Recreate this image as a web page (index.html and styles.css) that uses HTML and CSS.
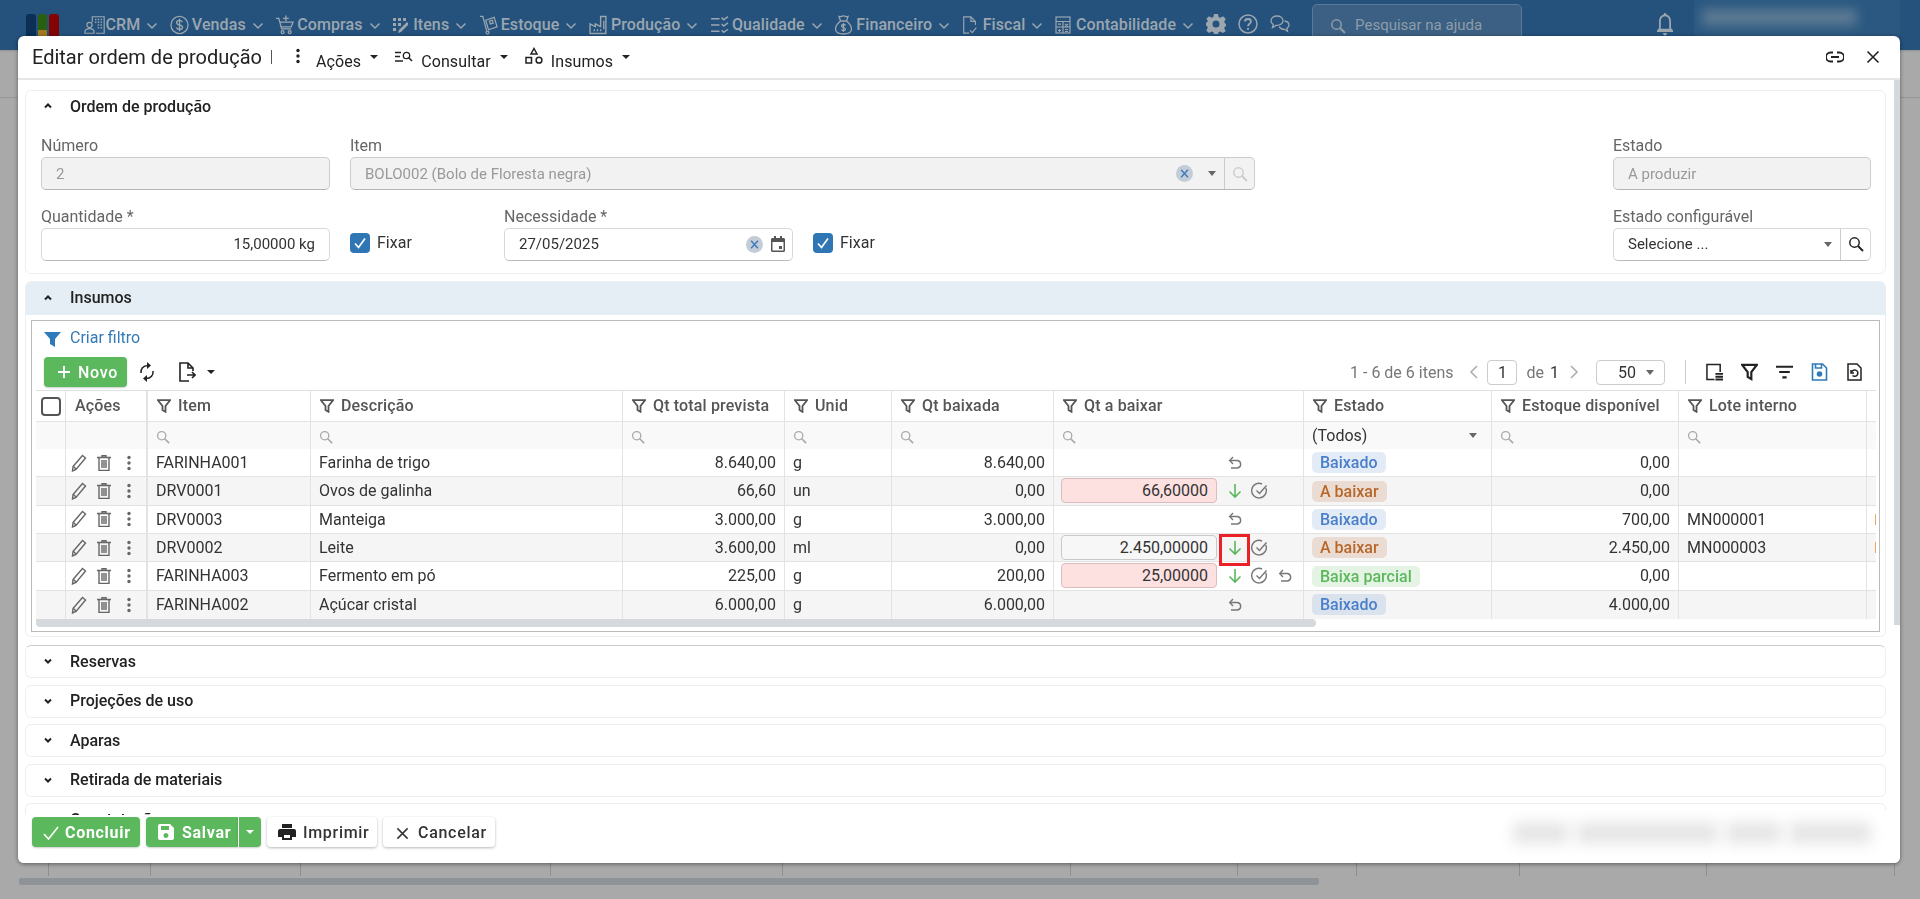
FILE: index.html
```html
<!DOCTYPE html>
<html lang="pt-BR">
<head>
<meta charset="utf-8">
<title>Editar ordem de produção</title>
<link rel="stylesheet" href="styles.css">
</head>
<body>
<svg class="sprite" xmlns="http://www.w3.org/2000/svg">
  <symbol id="i-chev" viewBox="0 0 12 8"><path d="M1.5 1.5 6 6l4.500-4.500" fill="none" stroke="currentColor" stroke-width="1.5"/></symbol>
  <symbol id="i-chev-bold" viewBox="0 0 10 8"><path d="M2 2.500 5 5.500l3-3" fill="none" stroke="currentColor" stroke-width="2"/></symbol>
  <symbol id="i-chev-up" viewBox="0 0 10 8"><path d="M2 5.500 5 2.500l3 3" fill="none" stroke="currentColor" stroke-width="2"/></symbol>
  <symbol id="i-crm" viewBox="0 0 24 20" fill="none" stroke="currentColor" stroke-width="1.300"><circle cx="6" cy="10" r="2.800"/><path d="M1 19v-1.500c0-2.200 2-3.500 5-3.500s5 1.300 5 3.500V19z"/><path d="M9 7V1h13v18H13"/><path d="M12 4h1.500M15 4h1.500M18 4h1.500M12 7h1.500M15 7h1.500M18 7h1.500M15 10h1.500M18 10h1.500M15 13h1.500M18 13h1.500" stroke-width="1.600"/></symbol>
  <symbol id="i-money" viewBox="0 0 20 20" fill="none" stroke="currentColor" stroke-width="1.400"><circle cx="10" cy="10" r="9"/><path d="M13 7c-.5-1.300-1.700-1.800-3-1.800-1.700 0-3 .8-3 2.300 0 3.200 6.200 1.600 6.200 4.800 0 1.500-1.400 2.400-3.200 2.400-1.500 0-2.800-.7-3.200-2M10 3.500v13"/></symbol>
  <symbol id="i-cart" viewBox="0 0 20 20" fill="none" stroke="currentColor" stroke-width="1.400"><path d="M1 3h3l3 11h10M5 7h14l-2 5H6.500"/><path d="M11.500 0v6M8.500 3h6"/><circle cx="8" cy="17.500" r="1.500"/><circle cx="15.500" cy="17.500" r="1.500"/></symbol>
  <symbol id="i-items" viewBox="0 0 16 16" fill="currentColor"><path d="M1 1h3v3H1zM6 1h3v3H6zM11 1h3v3h-3zM1 6h3v3H1zM6 6h3v3H6zM1 11h3v3H1z"/><path d="M15 5 7 13l-1 3 3-1 8-8z"/></symbol>
  <symbol id="i-stock" viewBox="0 0 20 20" fill="none" stroke="currentColor" stroke-width="1.300"><path d="M1 1h3l4 15"/><circle cx="9" cy="18" r="1.600"/><path d="m7 5 9-3 3 10-9 3z"/><path d="m11 6 3-1 1 3-3 1z"/></symbol>
  <symbol id="i-factory" viewBox="0 0 18 18" fill="none" stroke="currentColor" stroke-width="1.300"><path d="M1 17V8l5 2.500V8l5 2.500V1h5v16z"/><path d="M5 13v2M8 13v2M11 13v2M14 5v8"/></symbol>
  <symbol id="i-quality" viewBox="0 0 18 18" fill="none" stroke="currentColor" stroke-width="1.400"><path d="M1 3h8M1 9h8M1 15h8M11 2l2 2 4-3M11 8l2 2 4-3M11 14l2 2 4-3"/></symbol>
  <symbol id="i-bag" viewBox="0 0 18 20" fill="none" stroke="currentColor" stroke-width="1.300"><path d="M6 6 4.500 1.500C6 2.300 7 .8 9 .8s3 1.500 4.500.7L12 6zM6 6h6M6 6c-3 2.500-5 5.500-5 8 0 3 2 5 8 5s8-2 8-5c0-2.500-2-5.500-5-8"/><path d="M11 10.500C10.600 9.700 9.800 9.500 9 9.500c-1 0-2 .5-2 1.500 0 2 4 1.200 4 3.200 0 1-1 1.500-2 1.500-.9 0-1.700-.4-2-1.200M9 8v9"/></symbol>
  <symbol id="i-doc" viewBox="0 0 16 20" fill="none" stroke="currentColor" stroke-width="1.300"><path d="M7 19H1V1h8l5 5v4M9 1v5h5"/><path d="m8 16 2.500 2.500L15 13"/></symbol>
  <symbol id="i-calc" viewBox="0 0 16 18" fill="none" stroke="currentColor" stroke-width="1.200"><rect x="1" y="1" width="14" height="16"/><path d="M1 5.500h14M8 5.500V17M1 11h14M3 8.200h3M4.500 13v3M3 14.500h3M10 8l3 2.500M13 8l-3 2.500M10 13.500h3M10 15.500h3"/></symbol>
  <symbol id="i-gear" viewBox="0 0 20 20"><path fill="currentColor" fill-rule="evenodd" d="M8 0h4l.6 3 1.800.8L17 2.200 19.800 5l-1.600 2.600.8 1.800 1 .4v2.400l-1 .4-.8 1.800 1.600 2.600L17 19l-2.600-1.600-1.800.8L12 20H8l-.6-1.800-1.800-.8L3 19 .2 16.400l1.600-2.600-.8-1.800L0 11.400V8.600l1-.2.800-1.800L.2 5 3 2.200l2.600 1.600 1.800-.8zM10 6.500a3.500 3.500 0 1 0 0 7 3.500 3.500 0 0 0 0-7z"/></symbol>
  <symbol id="i-help" viewBox="0 0 20 20" fill="none" stroke="currentColor" stroke-width="1.500"><circle cx="10" cy="10" r="9"/><path d="M7 7.500C7 5.700 8.300 5 10 5s3 .9 3 2.500c0 2.300-3 2.300-3 4.700" stroke-width="1.800"/><path d="M10 14v1.800" stroke-width="2"/></symbol>
  <symbol id="i-chat" viewBox="0 0 20 18" fill="none" stroke="currentColor" stroke-width="1.300"><path d="M7 1c3.300 0 6 2 6 4.700S10.300 10.400 7 10.400H6L2.500 12.500l.8-3C1.800 8.600 1 7.300 1 5.700 1 3 3.700 1 7 1z"/><path d="M14.500 6c2.600.4 4.500 2 4.500 4 0 1.400-.8 2.600-2.200 3.300l.7 3-3-2c-2.500 0-4.500-1-5.300-2.700"/></symbol>
  <symbol id="i-search" viewBox="0 0 16 16" fill="none" stroke="currentColor" stroke-width="1.500"><circle cx="6.500" cy="6.500" r="4.700"/><path d="m10 10 5 5" stroke-width="2"/></symbol>
  <symbol id="i-bell" viewBox="0 0 20 24"><path fill="currentColor" fill-rule="evenodd" d="M10 0c.8 0 1.300.6 1.400 1.500C14.500 2.400 16 5 16 8.500V15l2 2.500V19H2v-1.500L4 15V8.500C4 5 5.500 2.400 8.600 1.500 8.700.6 9.200 0 10 0zm0 3.300C7.200 3.300 5.800 5.500 5.800 8.500v7.300h8.400V8.500c0-3-1.400-5.200-4.200-5.200zM8 20h4c0 1.500-.8 2.500-2 2.500S8 21.500 8 20z"/></symbol>
  <symbol id="i-dots" viewBox="0 0 6 16" fill="currentColor"><circle cx="3" cy="2.500" r="1.700"/><circle cx="3" cy="8" r="1.700"/><circle cx="3" cy="13.500" r="1.700"/></symbol>
  <symbol id="i-lookup" viewBox="0 0 18 12" fill="none" stroke="currentColor" stroke-width="1.300"><path d="M0 1.500h6M0 5.500h5M0 10h8"/><circle cx="11.500" cy="4.500" r="3.200"/><path d="m14 7 3 3" stroke-width="1.600"/></symbol>
  <symbol id="i-shapes" viewBox="0 0 18 17" fill="none" stroke="currentColor" stroke-width="1.500"><path d="M9 1.500 12 7H6z"/><rect x="1" y="10.500" width="5.500" height="5.500"/><circle cx="14" cy="13.200" r="2.900"/></symbol>
  <symbol id="i-link" viewBox="0 0 18 12" fill="none" stroke="currentColor" stroke-width="1.800"><path d="M7 1.500H4.500a4.500 4.500 0 0 0 0 9H7M11 1.500h2.500a4.500 4.500 0 0 1 0 9H11M5 6h8"/></symbol>
  <symbol id="i-close" viewBox="0 0 14 14" fill="none" stroke="currentColor" stroke-width="1.600"><path d="m1.500 1.500 11 11M12.500 1.500l-11 11"/></symbol>
  <symbol id="i-x" viewBox="0 0 16 16"><circle cx="8" cy="8" r="8" fill="#c4ccd6"/><path d="m4.800 4.500 6.400 7M11.200 4.500l-6.400 7" stroke="#3f7cbb" stroke-width="1.400"/></symbol>
  <symbol id="i-cal" viewBox="0 0 14 16"><path fill="#555" fill-rule="evenodd" d="M3 0h2v2h4V0h2v2h1.500c.8 0 1.500.7 1.500 1.500v11c0 .8-.7 1.500-1.500 1.500h-11C.7 16 0 15.300 0 14.500v-11C0 2.700.7 2 1.500 2H3zM1.500 6v8.500h11V6zM8 10h3v3H8z"/></symbol>
  <symbol id="i-check" viewBox="0 0 20 20"><path d="m5 10.500 3.500 4L15 5.500" fill="none" stroke="#fff" stroke-width="1.700"/></symbol>
  <symbol id="i-funnel-solid" viewBox="0 0 18 18"><path fill="#2f7ab9" d="M0 2h17l-6 7v8l-5-3V9z"/></symbol>
  <symbol id="i-funnel" viewBox="0 0 14 14"><path d="M1 1.200h12L8.500 7v5.800l-3-1.800V7z" fill="none" stroke="currentColor" stroke-width="1.800"/></symbol>
  <symbol id="i-sync" viewBox="0 0 16 20" fill="none" stroke="#222" stroke-width="1.500"><path d="M2 11C1.500 7 4 3.500 9 3.500"/><path d="M14 9c.5 4-2 7.500-7 7.500"/><path fill="#222" stroke="none" d="M8 0l4 3.500L8 7zM8 13l-4 3.500L8 20z"/></symbol>
  <symbol id="i-export" viewBox="0 0 17 20" fill="none" stroke="#222" stroke-width="1.600"><path d="M10 19H1V1h8l5 5v3M9 1v5h5M8 13h8M13 10l3 3-3 3"/></symbol>
  <symbol id="i-plus" viewBox="0 0 14 14"><path d="M7 1v12M1 7h12" stroke="#fff" stroke-width="2"/></symbol>
  <symbol id="i-left" viewBox="0 0 10 16"><path d="M8 2 2 8l6 6" fill="none" stroke="currentColor" stroke-width="1.500"/></symbol>
  <symbol id="i-right" viewBox="0 0 10 16"><path d="m2 2 6 6-6 6" fill="none" stroke="currentColor" stroke-width="1.500"/></symbol>
  <symbol id="i-columns" viewBox="0 0 18 18" fill="none" stroke="#222" stroke-width="1.600"><path d="M9 17H1V1h14v8"/><path fill="#222" stroke="none" d="M10 10h8v2h-8zM10 13h8v2h-8zM10 16h8v2h-8z"/></symbol>
  <symbol id="i-sort" viewBox="0 0 16 14"><path d="M0 2h16M3 7h10M6 12h4" stroke="#222" stroke-width="2"/></symbol>
  <symbol id="i-save" viewBox="0 0 16 18" fill="none" stroke="#2f7ab9" stroke-width="1.600"><path d="M1 1h10l4 4v12H1z"/><path d="M4 1v4h6V1"/><circle cx="8" cy="11" r="2" fill="#2f7ab9"/></symbol>
  <symbol id="i-restore" viewBox="0 0 15 18" fill="none" stroke="#222" stroke-width="1.500"><path d="M1 1h9l4 4v12H1z"/><path d="M4.500 9.500a3.200 3.200 0 1 1 1 3"/><path d="M4 7v3h3"/></symbol>
  <symbol id="i-pencil" viewBox="0 0 16 18" fill="none" stroke="#666" stroke-width="1.400"><path d="M2 12.500 11.500 1.500l3 2.500L5 15.500 1.500 17z"/><path d="m2.500 12.500 2.500 2.500"/></symbol>
  <symbol id="i-trash" viewBox="0 0 14 16" fill="none" stroke="#666" stroke-width="1.400"><path d="M0 2.500h14M5 2.500V.8h4v1.700M2 2.500v13h10v-13M5 5v8M7 5v8M9 5v8"/></symbol>
  <symbol id="i-down" viewBox="0 0 14 16" fill="none" stroke="#5cb85c" stroke-width="1.600"><path d="M7 1v13M1.500 8.500 7 14l5.500-5.500"/></symbol>
  <symbol id="i-done" viewBox="0 0 18 18" fill="none" stroke="#777" stroke-width="1.400"><path d="M14.800 6A7.300 7.300 0 1 1 11 2"/><path d="m5.500 8.500 3 3 7-8"/></symbol>
  <symbol id="i-undo" viewBox="0 0 14 14" fill="none" stroke="#777" stroke-width="1.400"><path d="M2 4.500h7.500a3.800 3.800 0 0 1 0 7.500H3"/><path d="M5 1 1.700 4.500 5 8"/></symbol>
  <symbol id="i-tick" viewBox="0 0 16 14"><path d="m1 8 4.500 5L15 1" fill="none" stroke="#fff" stroke-width="1.600"/></symbol>
  <symbol id="i-floppy" viewBox="0 0 16 16"><path fill="#fff" fill-rule="evenodd" d="M2 0h10l4 4v10a2 2 0 0 1-2 2H2a2 2 0 0 1-2-2V2a2 2 0 0 1 2-2zm1 2v4h8V2zm5 7a2.500 2.500 0 1 0 0 5 2.500 2.500 0 0 0 0-5z"/></symbol>
  <symbol id="i-print" viewBox="0 0 18 16"><path fill="#222" fill-rule="evenodd" d="M4 0h10v4H4zM2 5h14a2 2 0 0 1 2 2v6h-4v3H4v-3H0V7a2 2 0 0 1 2-2zm4 6v3h6v-3z"/></symbol>
</svg>

<div class="backdrop">
  <header class="topbar">
    <div class="logo"><span class="logo-bar logo-navy"></span><span class="logo-bar logo-mid"><span class="logo-ochre"></span></span><span class="logo-bar logo-red"></span></div>
    <nav class="nav">
      <a class="nav-item"><svg class="nav-ic nav-ic-crm"><use href="#i-crm"/></svg>CRM<svg class="nav-chev"><use href="#i-chev"/></svg></a>
      <a class="nav-item"><svg class="nav-ic"><use href="#i-money"/></svg>Vendas<svg class="nav-chev"><use href="#i-chev"/></svg></a>
      <a class="nav-item"><svg class="nav-ic"><use href="#i-cart"/></svg>Compras<svg class="nav-chev"><use href="#i-chev"/></svg></a>
      <a class="nav-item"><svg class="nav-ic nav-ic-sm"><use href="#i-items"/></svg>Itens<svg class="nav-chev"><use href="#i-chev"/></svg></a>
      <a class="nav-item"><svg class="nav-ic"><use href="#i-stock"/></svg>Estoque<svg class="nav-chev"><use href="#i-chev"/></svg></a>
      <a class="nav-item"><svg class="nav-ic"><use href="#i-factory"/></svg>Produção<svg class="nav-chev"><use href="#i-chev"/></svg></a>
      <a class="nav-item"><svg class="nav-ic"><use href="#i-quality"/></svg>Qualidade<svg class="nav-chev"><use href="#i-chev"/></svg></a>
      <a class="nav-item"><svg class="nav-ic"><use href="#i-bag"/></svg>Financeiro<svg class="nav-chev"><use href="#i-chev"/></svg></a>
      <a class="nav-item"><svg class="nav-ic nav-ic-sm"><use href="#i-doc"/></svg>Fiscal<svg class="nav-chev"><use href="#i-chev"/></svg></a>
      <a class="nav-item"><svg class="nav-ic nav-ic-sm"><use href="#i-calc"/></svg>Contabilidade<svg class="nav-chev"><use href="#i-chev"/></svg></a>
    </nav>
    <div class="top-tools">
      <svg class="tool-ic"><use href="#i-gear"/></svg>
      <svg class="tool-ic"><use href="#i-help"/></svg>
      <svg class="tool-ic"><use href="#i-chat"/></svg>
    </div>
    <div class="help-search"><svg class="help-search-ic"><use href="#i-search"/></svg>Pesquisar na ajuda</div>
    <svg class="bell"><use href="#i-bell"/></svg>
    <div class="user-blur"><span class="user-blob"></span></div>
  </header>
  <div class="subbar"></div>
  <div class="bg-cells"><i></i><i></i><i></i><i></i><i></i><i></i><i></i><i></i><i></i><i></i><i></i></div>
  <div class="bg-scroll"></div>
</div>

<section class="modal">
  <div class="modal-head">
    <h1 class="modal-title">Editar ordem de produção</h1>
    <span class="title-sep"></span>
    <svg class="head-dots"><use href="#i-dots"/></svg>
    <a class="head-menu">Ações<span class="caret-dark"></span></a>
    <svg class="head-ic"><use href="#i-lookup"/></svg>
    <a class="head-menu">Consultar<span class="caret-dark"></span></a>
    <svg class="head-ic head-ic-shapes"><use href="#i-shapes"/></svg>
    <a class="head-menu">Insumos<span class="caret-dark"></span></a>
    <svg class="head-link"><use href="#i-link"/></svg>
    <svg class="head-close"><use href="#i-close"/></svg>
  </div>

  <div class="modal-main">
    <div class="modal-scroll">
      <div class="card card-form">
        <div class="sec-head"><svg class="sec-chev"><use href="#i-chev-up"/></svg>Ordem de produção</div>
        <div class="form-row">
          <div class="field f-num"><label class="lbl">Número</label><div class="ctl ctl-off">2</div></div>
          <div class="field f-item"><label class="lbl">Item</label>
            <div class="ctl ctl-off ctl-combo"><span class="ctl-text">BOLO002 (Bolo de Floresta negra)</span><svg class="clear"><use href="#i-x"/></svg><span class="caret-sm"></span><span class="ctl-btn"><svg class="btn-search is-off"><use href="#i-search"/></svg></span></div></div>
          <div class="field f-end"><label class="lbl">Estado</label><div class="ctl ctl-off">A produzir</div></div>
        </div>
        <div class="form-row form-row-2">
          <div class="field f-num"><label class="lbl">Quantidade *</label><div class="ctl ctl-right">15,00000 kg</div></div>
          <div class="fix f-fix1"><span class="cb"><svg><use href="#i-check"/></svg></span>Fixar</div>
          <div class="field f-num f-date"><label class="lbl">Necessidade *</label>
            <div class="ctl ctl-combo ctl-date"><span class="ctl-text">27/05/2025</span><svg class="clear"><use href="#i-x"/></svg><svg class="cal"><use href="#i-cal"/></svg></div></div>
          <div class="fix"><span class="cb"><svg><use href="#i-check"/></svg></span>Fixar</div>
          <div class="field f-end"><label class="lbl">Estado configurável</label>
            <div class="ctl ctl-combo"><span class="ctl-text">Selecione ...</span><span class="caret-sm"></span><span class="ctl-btn"><svg class="btn-search"><use href="#i-search"/></svg></span></div></div>
        </div>
      </div>

      <div class="card card-grid">
        <div class="sec-head sec-head-on"><svg class="sec-chev"><use href="#i-chev-up"/></svg>Insumos</div>
        <div class="grid-box">
          <div class="filter-link"><svg class="filter-link-ic"><use href="#i-funnel-solid"/></svg>Criar filtro</div>
          <div class="toolbar">
            <button class="btn btn-green btn-new"><svg class="btn-plus"><use href="#i-plus"/></svg>Novo</button>
            <svg class="tb-sync"><use href="#i-sync"/></svg>
            <svg class="tb-export"><use href="#i-export"/></svg>
            <span class="caret-dark caret-export"></span>
            <div class="pager">
              <span class="pager-count">1 - 6 de 6 itens</span>
              <svg class="pager-arrow"><use href="#i-left"/></svg>
              <span class="pager-input">1</span>
              <span class="pager-de">de</span>
              <span class="pager-total">1</span>
              <svg class="pager-arrow"><use href="#i-right"/></svg>
              <span class="pager-size">50<span class="caret-sm"></span></span>
              <span class="pager-sep"></span>
              <svg class="tb-ic"><use href="#i-columns"/></svg>
              <svg class="tb-ic tb-dark"><use href="#i-funnel"/></svg>
              <svg class="tb-ic"><use href="#i-sort"/></svg>
              <svg class="tb-ic"><use href="#i-save"/></svg>
              <svg class="tb-ic"><use href="#i-restore"/></svg>
            </div>
          </div>
          <div class="table-wrap">
            <table class="dt">
              <colgroup>
                <col class="c-check"><col class="c-act"><col class="c-item"><col class="c-desc"><col class="c-num"><col class="c-unit"><col class="c-num"><col class="c-qt"><col class="c-state"><col class="c-stock"><col class="c-lot"><col class="c-extra">
              </colgroup>
              <thead>
                <tr class="th-row">
                  <th><span class="cb-empty"></span></th>
                  <th class="b2">Ações</th>
                  <th><svg class="th-f"><use href="#i-funnel"/></svg>Item</th>
                  <th><svg class="th-f"><use href="#i-funnel"/></svg>Descrição</th>
                  <th><svg class="th-f"><use href="#i-funnel"/></svg>Qt total prevista</th>
                  <th><svg class="th-f"><use href="#i-funnel"/></svg>Unid</th>
                  <th><svg class="th-f"><use href="#i-funnel"/></svg>Qt baixada</th>
                  <th><svg class="th-f"><use href="#i-funnel"/></svg>Qt a baixar</th>
                  <th><svg class="th-f"><use href="#i-funnel"/></svg>Estado</th>
                  <th><svg class="th-f"><use href="#i-funnel"/></svg>Estoque disponível</th>
                  <th><svg class="th-f"><use href="#i-funnel"/></svg>Lote interno</th>
                  <th><svg class="th-f"><use href="#i-funnel"/></svg></th>
                </tr>
                <tr class="tf-row">
                  <td></td><td class="b2"></td>
                  <td><svg class="tf-s"><use href="#i-search"/></svg></td>
                  <td><svg class="tf-s"><use href="#i-search"/></svg></td>
                  <td><svg class="tf-s"><use href="#i-search"/></svg></td>
                  <td><svg class="tf-s"><use href="#i-search"/></svg></td>
                  <td><svg class="tf-s"><use href="#i-search"/></svg></td>
                  <td><svg class="tf-s"><use href="#i-search"/></svg></td>
                  <td class="tf-todos">(Todos)<span class="caret-sm"></span></td>
                  <td><svg class="tf-s"><use href="#i-search"/></svg></td>
                  <td><svg class="tf-s"><use href="#i-search"/></svg></td>
                  <td><svg class="tf-s"><use href="#i-search"/></svg></td>
                </tr>
              </thead>
              <tbody>
                <tr>
                  <td></td><td class="b2 acts"><svg class="a-pen"><use href="#i-pencil"/></svg><svg class="a-trash"><use href="#i-trash"/></svg><svg class="a-dots"><use href="#i-dots"/></svg></td>
                  <td>FARINHA001</td><td>Farinha de trigo</td><td class="r">8.640,00</td><td>g</td><td class="r">8.640,00</td>
                  <td class="qt"><div class="qt-in"><span class="qt-box is-empty"></span><span class="act"><svg class="ic-undo"><use href="#i-undo"/></svg></span></div></td>
                  <td><span class="tag tag-blue">Baixado</span></td><td class="r">0,00</td><td></td><td></td>
                </tr>
                <tr>
                  <td></td><td class="b2 acts"><svg class="a-pen"><use href="#i-pencil"/></svg><svg class="a-trash"><use href="#i-trash"/></svg><svg class="a-dots"><use href="#i-dots"/></svg></td>
                  <td>DRV0001</td><td>Ovos de galinha</td><td class="r">66,60</td><td>un</td><td class="r">0,00</td>
                  <td class="qt"><div class="qt-in"><span class="qt-box is-bad">66,60000</span><span class="act"><svg class="ic-down"><use href="#i-down"/></svg></span><span class="act"><svg class="ic-done"><use href="#i-done"/></svg></span></div></td>
                  <td><span class="tag tag-brown">A baixar</span></td><td class="r">0,00</td><td></td><td></td>
                </tr>
                <tr>
                  <td></td><td class="b2 acts"><svg class="a-pen"><use href="#i-pencil"/></svg><svg class="a-trash"><use href="#i-trash"/></svg><svg class="a-dots"><use href="#i-dots"/></svg></td>
                  <td>DRV0003</td><td>Manteiga</td><td class="r">3.000,00</td><td>g</td><td class="r">3.000,00</td>
                  <td class="qt"><div class="qt-in"><span class="qt-box is-empty"></span><span class="act"><svg class="ic-undo"><use href="#i-undo"/></svg></span></div></td>
                  <td><span class="tag tag-blue">Baixado</span></td><td class="r">700,00</td><td>MN000001</td><td><span class="mark"></span></td>
                </tr>
                <tr>
                  <td></td><td class="b2 acts"><svg class="a-pen"><use href="#i-pencil"/></svg><svg class="a-trash"><use href="#i-trash"/></svg><svg class="a-dots"><use href="#i-dots"/></svg></td>
                  <td>DRV0002</td><td>Leite</td><td class="r">3.600,00</td><td>ml</td><td class="r">0,00</td>
                  <td class="qt"><div class="qt-in"><span class="qt-box">2.450,00000</span><span class="act is-marked"><svg class="ic-down"><use href="#i-down"/></svg></span><span class="act"><svg class="ic-done"><use href="#i-done"/></svg></span></div></td>
                  <td><span class="tag tag-brown">A baixar</span></td><td class="r">2.450,00</td><td>MN000003</td><td><span class="mark"></span></td>
                </tr>
                <tr>
                  <td></td><td class="b2 acts"><svg class="a-pen"><use href="#i-pencil"/></svg><svg class="a-trash"><use href="#i-trash"/></svg><svg class="a-dots"><use href="#i-dots"/></svg></td>
                  <td>FARINHA003</td><td>Fermento em pó</td><td class="r">225,00</td><td>g</td><td class="r">200,00</td>
                  <td class="qt"><div class="qt-in"><span class="qt-box is-bad">25,00000</span><span class="act"><svg class="ic-down"><use href="#i-down"/></svg></span><span class="act"><svg class="ic-done"><use href="#i-done"/></svg></span><span class="act"><svg class="ic-undo"><use href="#i-undo"/></svg></span></div></td>
                  <td><span class="tag tag-green">Baixa parcial</span></td><td class="r">0,00</td><td></td><td></td>
                </tr>
                <tr>
                  <td></td><td class="b2 acts"><svg class="a-pen"><use href="#i-pencil"/></svg><svg class="a-trash"><use href="#i-trash"/></svg><svg class="a-dots"><use href="#i-dots"/></svg></td>
                  <td>FARINHA002</td><td>Açúcar cristal</td><td class="r">6.000,00</td><td>g</td><td class="r">6.000,00</td>
                  <td class="qt"><div class="qt-in"><span class="qt-box is-empty"></span><span class="act"><svg class="ic-undo"><use href="#i-undo"/></svg></span></div></td>
                  <td><span class="tag tag-blue">Baixado</span></td><td class="r">4.000,00</td><td></td><td></td>
                </tr>
              </tbody>
            </table>
          </div>
          <div class="hbar"><span class="hbar-thumb"></span></div>
        </div>
      </div>

      <div class="card card-fold card-fold-first"><div class="sec-head"><svg class="sec-chev"><use href="#i-chev-bold"/></svg>Reservas</div></div>
      <div class="card card-fold"><div class="sec-head"><svg class="sec-chev"><use href="#i-chev-bold"/></svg>Projeções de uso</div></div>
      <div class="card card-fold"><div class="sec-head"><svg class="sec-chev"><use href="#i-chev-bold"/></svg>Aparas</div></div>
      <div class="card card-fold"><div class="sec-head"><svg class="sec-chev"><use href="#i-chev-bold"/></svg>Retirada de materiais</div></div>
      <div class="card card-fold"><div class="sec-head"><svg class="sec-chev"><use href="#i-chev-bold"/></svg>Constatações</div></div>
    </div>
    <div class="vbar"></div>
  </div>

  <div class="modal-foot">
    <button class="btn btn-green btn-done"><svg class="btn-tick"><use href="#i-tick"/></svg>Concluir</button>
    <div class="split">
      <button class="btn btn-green btn-save"><svg class="btn-floppy"><use href="#i-floppy"/></svg>Salvar</button>
      <button class="btn btn-green btn-more"><span class="caret-white"></span></button>
    </div>
    <button class="btn btn-white btn-print"><svg class="btn-printer"><use href="#i-print"/></svg>Imprimir</button>
    <button class="btn btn-white btn-cancel"><svg class="btn-x"><use href="#i-close"/></svg>Cancelar</button>
    <div class="foot-blur"><span class="foot-blob b1"></span><span class="foot-blob b2w"></span><span class="foot-blob b3"></span><span class="foot-blob b4"></span></div>
  </div>
</section>
</body>
</html>
```
FILE: styles.css
```css
* { box-sizing: border-box; }
html, body { margin: 0; height: 100%; overflow: hidden; }
body { font-family: Roboto, "Liberation Sans", sans-serif; font-size: 16px; color: #333; background: #a9a9a9; }
.sprite { display: none; }
button { font-family: inherit; }

/* dimmed application behind the dialog */
.backdrop { height: 100vh; display: flex; flex-direction: column; }
.topbar { height: 50px; flex: none; background: #24527d; color: #9ba6af; display: flex; align-items: flex-start; padding-left: 26px; box-shadow: 0 1px 2px rgba(0,0,0,.15); }
.logo { display: flex; gap: 2px; margin-top: 14px; margin-right: 25px; }
.logo-bar { width: 9.500px; height: 30px; border-radius: 3px 3px 0 0; display: block; overflow: hidden; }
.logo-navy { background: #0b2f55; }
.logo-mid { background: #2a5f10; padding-top: 16px; }
.logo-ochre { display: block; height: 14px; background: #a27a1c; }
.logo-red { background: #840404; }
.nav { display: flex; gap: 11.500px; margin-top: 13px; flex: none; }
.nav-item { display: flex; align-items: center; height: 23px; font-size: 16px; font-weight: 500; letter-spacing: .1px; }
.nav-ic { width: 19px; height: 20px; margin-right: 3px; }
.nav-ic-crm { width: 22px; margin-right: 0; }
.nav-ic-sm { width: 16px; height: 18px; margin-right: 5px; }
.nav-chev { width: 12px; height: 8px; margin-left: 6px; margin-top: 2px; }
.top-tools { display: flex; gap: 12px; margin-top: 14px; margin-left: 12px; flex: none; }
.tool-ic { width: 20px; height: 20px; }
.help-search { width: 210px; flex: none; height: 46px; margin-left: 22px; margin-top: 4px; background: #3b6083; border: 1px solid #5a7a97; border-radius: 5px; display: flex; align-items: flex-start; padding: 11px 0 0 17px; font-size: 15px; color: #8e9ca9; }
.help-search-ic { width: 16px; height: 16px; margin-right: 9px; margin-top: 2px; color: #8e9ca9; flex: none; }
.bell { width: 20px; height: 24px; margin-left: 133px; margin-top: 13px; flex: none; }
.user-blur { width: 206px; flex: none; height: 36px; margin-left: 19px; background: #2a5880; padding: 9px 0 0 8px; }
.user-blob { display: block; width: 155px; height: 17px; background: #5d7a93; filter: blur(6px); }
.subbar { height: 48px; flex: none; border-bottom: 1px solid #969696; }
.bg-cells { margin-top: auto; height: 40px; flex: none; display: grid; grid-template-columns: 49px 102px 150px 250px 232px 288px 167px 119px 163px 187px 188px; }
.bg-cells i { border-right: 1px solid #8e8e8e; }
.bg-scroll { flex: none; width: 1300px; height: 7px; margin: 2px 0 14px 19px; background: #8d9396; border-radius: 2px; }

/* dialog */
.modal { position: fixed; left: 18px; top: 36px; width: 1882px; height: 827px; background: #fff; border-radius: 6px; box-shadow: 0 1px 4px rgba(0,0,0,.45); display: flex; flex-direction: column; overflow: hidden; }
.modal-head { height: 44px; flex: none; border-bottom: 2px solid #e6e6e6; display: flex; align-items: center; padding-left: 14px; color: #222; }
.modal-title { margin: 0; font-size: 20px; font-weight: 400; color: #222; }
.title-sep { width: 1px; height: 14px; background: #555; margin: 0 23px 0 9px; }
.head-dots { width: 6px; height: 16px; margin-right: 15px; margin-top: -3px; }
.head-menu { display: flex; align-items: center; font-size: 16px; letter-spacing: .1px; position: relative; top: 4px; margin-right: 17px; }
.head-menu .caret-dark { margin-left: 9px; margin-top: -8px; }
.head-ic { width: 18px; height: 12px; margin-right: 8px; margin-top: -1px; }
.head-ic-shapes { height: 17px; margin-top: -3px; }
.head-link { width: 18px; height: 12px; margin-left: auto; }
.head-close { width: 14px; height: 14px; margin-left: 22px; margin-right: 20px; }
.caret-dark { display: inline-block; width: 0; height: 0; border-left: 4.500px solid transparent; border-right: 4.500px solid transparent; border-top: 4.500px solid #222; }
.caret-sm { display: inline-block; width: 0; height: 0; border-left: 4px solid transparent; border-right: 4px solid transparent; border-top: 5px solid #666; }
.caret-white { display: inline-block; width: 0; height: 0; border-left: 4.500px solid transparent; border-right: 4.500px solid transparent; border-top: 4.500px solid #fff; }

.modal-main { flex: 1; min-height: 0; display: flex; }
.modal-scroll { flex: 1; min-width: 0; overflow: hidden; padding: 10px 8px 0 7px; }
.vbar { width: 6px; height: 545px; flex: none; background: #d5d8dc; }

.card { background: #fff; border: 1px solid #eee; border-radius: 6px; margin-bottom: 7px; }
.card-form { height: 184px; }
.sec-head { height: 32px; display: flex; align-items: center; padding: 0 0 2px 17px; font-size: 16px; font-weight: 500; color: #222; }
.sec-head-on { background: #e4eef4; border-radius: 5px 5px 0 0; height: 33px; }
.sec-chev { width: 10px; height: 8px; margin-right: 17px; color: #222; }

.form-row { display: flex; padding: 12px 14px 0 15px; }
.form-row-2 { padding-top: 15.500px; }
.field { display: flex; flex-direction: column; }
.f-num { width: 289px; }
.f-item { width: 905px; margin-left: 20px; }
.f-date { margin-left: 20px; }
.f-end { width: 258px; margin-left: auto; }
.lbl { height: 22px; font-size: 16px; color: #666; line-height: 22px; }
.ctl { height: 33px; border: 1px solid #d8d8d8; border-bottom-color: #bbb; border-radius: 5px; display: flex; align-items: center; padding-left: 14px; font-size: 15px; color: #333; background: #fff; }
.ctl-off { background: #f2f2f2; color: #999; border-color: #ccc; border-bottom-color: #b5b5b5; }
.ctl-right { justify-content: flex-end; padding-right: 14px; }
.ctl-text { flex: 1; }
.ctl-combo { padding-right: 0; }
.clear { width: 17px; height: 17px; margin-right: 15px; flex: none; }
.ctl-date .clear { margin-right: 8px; }
.cal { width: 14px; height: 16px; margin-right: 7px; }
.ctl-combo .caret-sm { margin-right: 8px; }
.ctl-btn { width: 30px; align-self: stretch; flex: none; border-left: 1px solid #ccc; display: flex; align-items: center; justify-content: center; }
.btn-search { width: 16px; height: 16px; color: #222; }
.btn-search.is-off { color: #ccc; }
.fix { display: flex; align-items: center; align-self: flex-end; height: 28px; margin-left: 20px; margin-bottom: 4px; font-size: 16px; color: #333; }
.f-fix1 { width: 134px; }
.cb { width: 20px; height: 20px; border-radius: 4px; background: #2f76b5; margin-right: 7px; display: block; }
.cb svg { width: 20px; height: 20px; display: block; }

/* grid panel */
.card-grid { height: 356px; margin-bottom: 8px; }
.grid-box { margin: 5px 5px 0 5px; height: 312px; border: 1px solid #bbb; padding: 0 3px 0 4px; }
.filter-link { height: 36px; display: flex; align-items: center; color: #337ab7; font-size: 16px; padding: 0 0 3px 8px; }
.filter-link-ic { width: 18px; height: 18px; margin-right: 8px; margin-top: 3px; }
.toolbar { height: 30px; margin-bottom: 3px; display: flex; align-items: center; padding-left: 8px; }
.btn { border: 0; height: 30px; border-radius: 4px; font-size: 16px; display: flex; align-items: center; cursor: default; letter-spacing: .7px; padding: 0; }
.btn-green { background: #5cb85c; color: #fff; font-weight: 700; box-shadow: 0 1px 2px rgba(0,0,0,.2); }
.btn-white { background: #fff; color: #333; font-weight: 500; box-shadow: 0 1px 3px rgba(0,0,0,.28); }
.btn-new { width: 83px; padding-left: 13px; font-weight: 500; }
.btn-plus { width: 14px; height: 14px; margin-right: 7px; }
.tb-sync { width: 16px; height: 20px; margin-left: 12px; }
.tb-export { width: 17px; height: 20px; margin-left: 24px; }
.caret-export { margin-left: 11px; }
.pager { margin-left: auto; display: flex; align-items: center; color: #777; font-size: 16px; padding-right: 13px; }
.pager-count { margin-right: 16px; }
.pager-arrow { width: 10px; height: 16px; color: #aaa; }
.pager-input { width: 30px; height: 25px; border: 1px solid #ccc; border-radius: 4px; display: flex; align-items: center; justify-content: center; color: #333; margin: 0 9px 0 8px; }
.pager-de { margin-right: 6px; }
.pager-total { color: #333; margin-right: 10px; }
.pager-size { width: 69px; height: 25px; border: 1px solid #ccc; border-radius: 4px; display: flex; align-items: center; justify-content: flex-end; gap: 10px; padding-right: 10px; color: #333; margin-left: 17px; }
.pager-sep { width: 1px; height: 24px; background: #ccc; margin: 0 20px; }
.tb-ic { width: 17px; height: 18px; margin-right: 18px; }
.tb-ic:last-child { margin-right: 0; }
.tb-dark { color: #222; }

.table-wrap { overflow: hidden; height: 229px; }
.dt { table-layout: fixed; border-collapse: separate; border-spacing: 0; width: 1951px; font-size: 16px; color: #333; }
.c-check { width: 30px; } .c-act { width: 82px; } .c-item { width: 163px; } .c-desc { width: 312px; } .c-num { width: 162px; } .c-unit { width: 107px; } .c-qt { width: 250px; } .c-state { width: 188px; } .c-stock { width: 187px; } .c-lot { width: 188px; } .c-extra { width: 120px; }
.dt th, .dt td { padding: 0 8px; border-right: 1px solid #e3e3e3; border-bottom: 1px solid #e3e3e3; white-space: nowrap; overflow: hidden; text-align: left; font-weight: 400; }
.dt .b2 { border-right-width: 2px; }
.th-row th { height: 32px; border-top: 1px solid #e0e0e0; font-weight: 500; color: #555; padding: 0 8px 2px 9px; letter-spacing: .15px; }
.th-row th:first-child { padding: 0 0 0 5px; }
.th-f { width: 14px; height: 14px; margin-right: 7px; vertical-align: -2px; color: #555; }
.cb-empty { display: block; width: 20px; height: 19px; border: 2px solid #555; border-radius: 4px; }
.tf-row td { height: 27px; background: #f9f9f9; border-bottom: 0; }
.tf-s { width: 14px; height: 14px; color: #aaa; vertical-align: -3px; }
.tf-todos .caret-sm { float: right; margin-top: 7px; margin-right: 6px; }
.dt tbody tr { height: 28.330px; }
.dt tbody td { height: 28.330px; }
.dt tbody tr:nth-child(even) td { background: #f5f5f5; }
.dt tbody tr:last-child td { border-bottom: 0; }
.dt .r { text-align: right; }
.acts { line-height: 0; padding: 0 0 0 5px !important; }
.acts svg { vertical-align: middle; }
.a-pen { width: 16px; height: 18px; }
.a-trash { width: 14px; height: 16px; margin-left: 10px; }
.a-dots { width: 6px; height: 16px; margin-left: 15px; color: #666; }
.dt .qt { padding: 0; overflow: visible; }
.qt-in { display: flex; align-items: center; padding-left: 7px; }
.qt-box { width: 156px; height: 25px; border: 1px solid #c9c9c9; border-radius: 4px; display: flex; align-items: center; justify-content: flex-end; padding-right: 8px; margin-right: 5px; background: #f7f7f7; }
.qt-box.is-bad { background: #fde1e1; border-color: #dcbcbc; }
.qt-box.is-empty { visibility: hidden; }
.act { width: 25px; height: 24px; display: flex; align-items: center; justify-content: center; position: relative; }
.act.is-marked::after { content: ""; position: absolute; left: -3px; right: -3px; top: -2px; bottom: -6px; border: 3px solid #ea2227; }
.ic-down { width: 14px; height: 16px; }
.ic-done { width: 18px; height: 18px; }
.ic-undo { width: 14px; height: 14px; }
.tag { display: inline-block; height: 21px; line-height: 21px; padding: 0 8px; border-radius: 5px; font-weight: 500; vertical-align: middle; }
.tag-blue { background: rgba(58,115,200,.14); color: #4a7fc9; }
.tag-brown { background: rgba(184,103,42,.17); color: #b8672a; }
.tag-green { background: rgba(92,184,92,.17); color: #5cb85c; }
.mark { display: block; width: 2px; height: 11px; background: #f0a860; }
.hbar { height: 8px; background: #fff; }
.hbar-thumb { display: block; width: 1280px; height: 8px; background: #d5d8dc; border-radius: 0 4px 4px 4px; }

.card-fold { height: 33px; margin-bottom: 6.600px; }
.card-fold-first { border-top-color: #ccc; }

/* footer */
.modal-foot { height: 48px; flex: none; display: flex; align-items: flex-start; padding: 2px 0 0 14px; gap: 6px; position: relative; background: #fff; }
.btn-done { width: 108px; padding-left: 11px; }
.btn-tick { width: 16px; height: 14px; margin-right: 6px; margin-top: 2px; }
.split { display: flex; }
.btn-save { width: 92px; padding-left: 12px; border-radius: 4px 0 0 4px; }
.btn-floppy { width: 16px; height: 16px; margin-right: 8px; }
.btn-more { width: 23px; border-radius: 0 4px 4px 0; border-left: 1px solid #fff; justify-content: center; }
.btn-print { width: 110px; padding-left: 11px; }
.btn-printer { width: 18px; height: 16px; margin-right: 7px; }
.btn-cancel { width: 112px; padding-left: 13px; }
.btn-x { width: 13px; height: 13px; margin-right: 9px; margin-top: 2px; }
.foot-blur { position: absolute; right: 0; top: -5px; width: 403px; height: 46px; background: #fff; display: flex; gap: 8px; padding: 0 19px 0 16px; align-items: center; overflow: hidden; }
.foot-blob { display: block; height: 22px; background: #e6e6e6; filter: blur(7px); }
.b1 { width: 55px; } .b2w { width: 142px; } .b3 { width: 55px; } .b4 { width: 82px; }
```
